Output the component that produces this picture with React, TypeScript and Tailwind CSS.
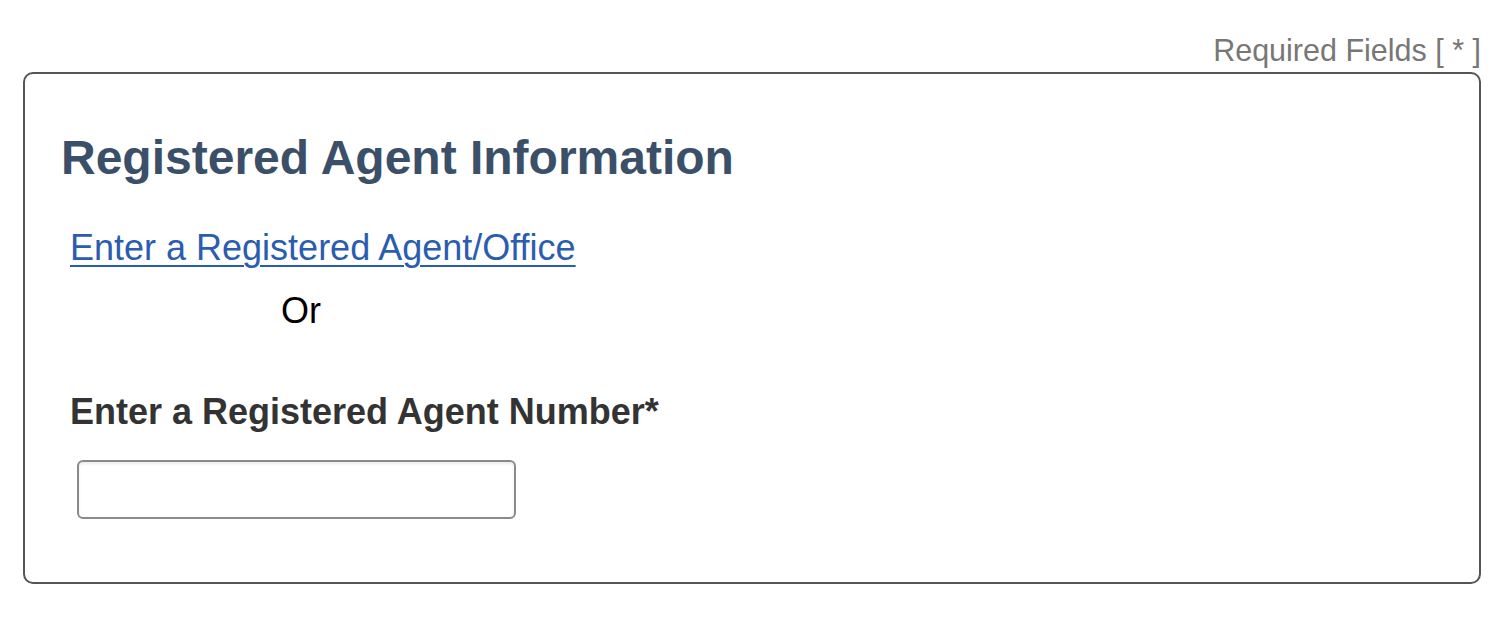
const App = () => {
  return (
    <div className="min-h-screen bg-white pl-[23px] pr-[27px] pt-[33px] font-['Liberation_Sans',Arial,sans-serif]">
      <div className="flex justify-end">
        <span className="text-[30.5px] leading-[34px] text-[#777777]">Required Fields [ * ]</span>
      </div>

      <div className="mt-[5px] h-[512px] rounded-[10px] border-2 border-[#555555] pl-[36px]">
        <h2 className="mt-[56px] text-[48px] font-bold leading-[56px] text-[#3b5068]">
          Registered Agent Information
        </h2>

        <div className="mt-[41px] pl-[9px]">
          <a href="#" className="text-[36px] leading-[42px] text-[#2a5db0] underline underline-offset-[5px] decoration-2">
            Enter a Registered Agent/Office
          </a>
        </div>

        <div className="mt-[21px] pl-[220px] text-[36px] leading-[42px] text-black">Or</div>

        <label className="mt-[59px] block pl-[9px] text-[36px] font-bold leading-[42px] text-[#333333]">
          Enter a Registered Agent Number*
        </label>

        <input
          type="text"
          className="ml-[16px] mt-[27px] block h-[59px] w-[439px] rounded-[6px] border-2 border-[#8a8a8a] bg-white shadow-[inset_0_2px_3px_rgba(0,0,0,0.08)] outline-none"
        />
      </div>
    </div>
  );
};

export default App;
